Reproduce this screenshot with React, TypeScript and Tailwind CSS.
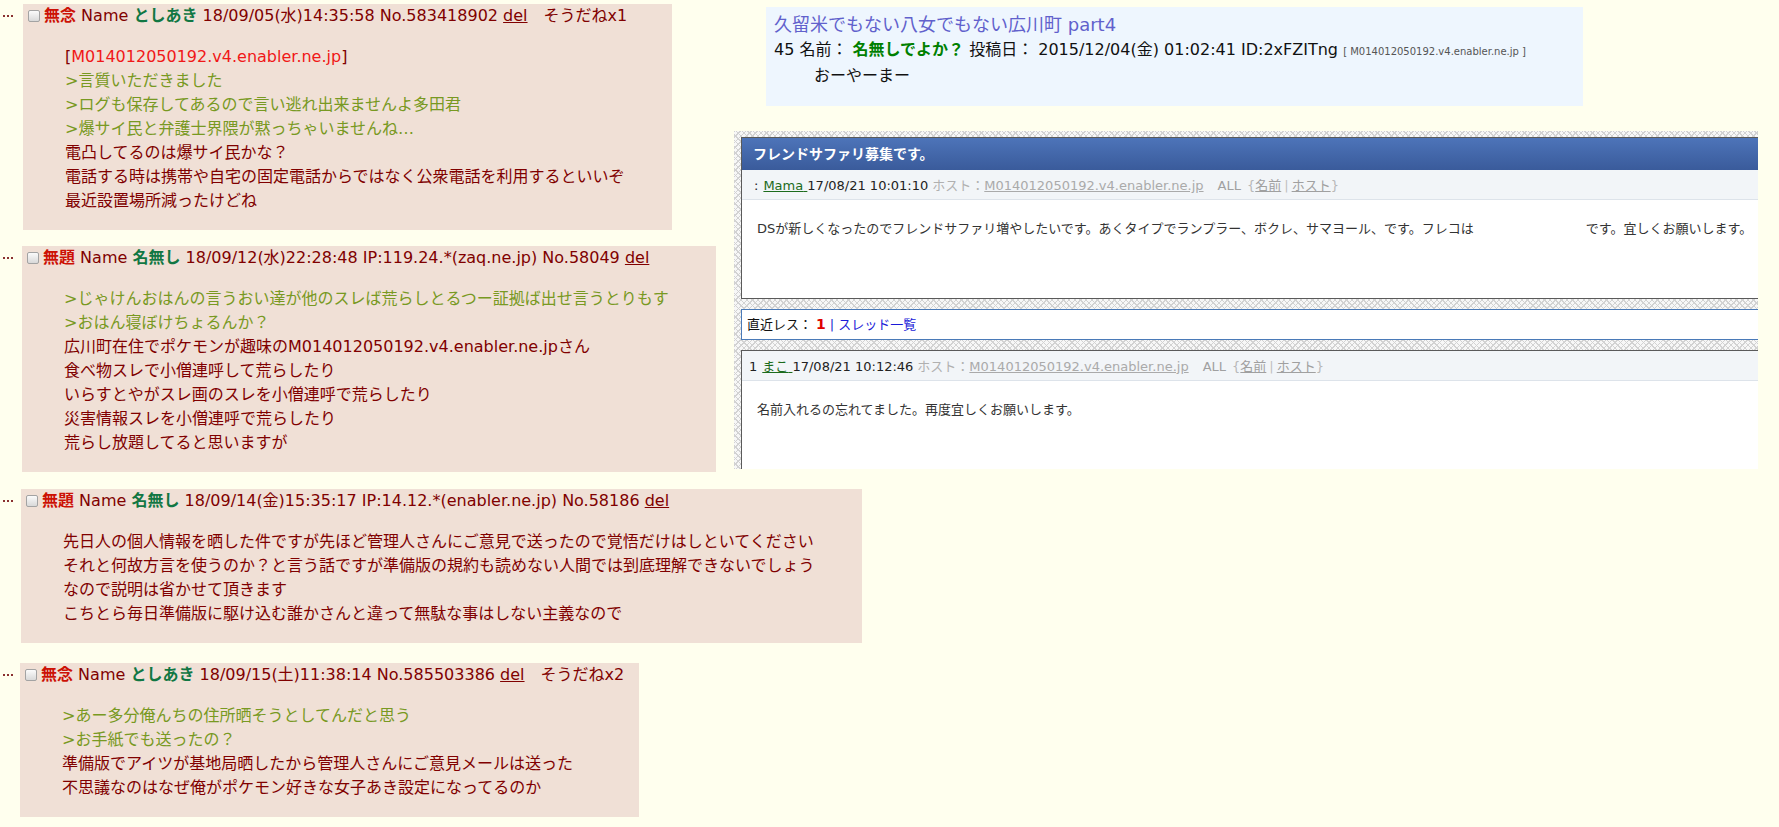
import React from "react";

type Line = { t: string; kind?: "quote" | "host" };

type PostProps = {
  subject: string;
  name: string;
  info: string;
  sodane?: string;
  lines: Line[];
  markerW: string;
  boxW: string;
};

const hatch =
  "bg-[#f7f7f7] bg-[image:repeating-linear-gradient(45deg,#d2d2d2_0px,#d2d2d2_1px,transparent_1px,transparent_4px),repeating-linear-gradient(135deg,#d2d2d2_0px,#d2d2d2_1px,transparent_1px,transparent_4px)]";

function Post({ subject, name, info, sodane, lines, markerW, boxW }: PostProps) {
  return (
    <div className="flex items-start">
      {/* "…" marker left of each post */}
      <div className={`${markerW} flex shrink-0 gap-[2px] pl-[3px] pt-[11px]`}>
        <span className="h-[2px] w-[2px] bg-[#8a3030]" />
        <span className="h-[2px] w-[2px] bg-[#8a3030]" />
        <span className="h-[2px] w-[2px] bg-[#8a3030]" />
      </div>
      <div className={`${boxW} bg-[#f0e0d6] text-[#800000]`}>
        {/* header */}
        <div className="flex h-[24px] items-center whitespace-nowrap pl-[5px] text-[16px]">
          <span className="inline-block h-[12px] w-[12px] rounded-[2px] border border-[#a3a3a3] bg-linear-to-b from-[#fbfbfb] to-[#d9d9d9]" />
          <span className="ml-[4px]">
            <b className="text-[#cc1105]">{subject}</b> Name{" "}
            <b className="text-[#117743]">{name}</b> {info}{" "}
            <u>del</u>
          </span>
          {sodane && <span className="ml-[16px]">{sodane}</span>}
        </div>
        {/* body */}
        <div className="my-[17px] pl-[42px] text-[16px] leading-[24px]">
          {lines.map((l, i) => (
            <div key={i} className="whitespace-nowrap">
              {l.kind === "host" ? (
                <>
                  [<span className="text-[#f01818]">{l.t}</span>]
                </>
              ) : l.kind === "quote" ? (
                <span className="text-[#789922]">{l.t}</span>
              ) : (
                l.t
              )}
            </div>
          ))}
        </div>
      </div>
    </div>
  );
}

function InfoRow({ lead, name, date }: { lead: string; name: string; date: string }) {
  return (
    <div className="flex items-center whitespace-nowrap text-[13px] text-[#222]">
      <span>{lead}</span>
      <span className="ml-[5px] text-[#1c6b1c] underline">{name}&nbsp;</span>
      <span>{date}</span>
      <span className="ml-[4px] text-[#b0b0b0]">ホスト：</span>
      <span className="text-[#aaaaaa] underline">M014012050192.v4.enabler.ne.jp</span>
      <span className="ml-[14px] text-[#a0a0a0]">ALL</span>
      <span className="ml-[6px] text-[#b8b8b8]">{"{"}</span>
      <span className="text-[#a0a0a0] underline">名前</span>
      <span className="mx-[3px] text-[#c0c0c0]">|</span>
      <span className="text-[#a0a0a0] underline">ホスト</span>
      <span className="text-[#b8b8b8]">{"}"}</span>
    </div>
  );
}

export default function App() {
  return (
    <div className="min-h-screen w-full bg-[#ffffee] font-['DejaVu_Sans','Noto_Sans_CJK_JP',sans-serif]">
      <div className="flex">
        {/* left column */}
        <div className="w-[734px] shrink-0 pt-[4px]">
          <Post
            subject="無念"
            name="としあき"
            info="18/09/05(水)14:35:58 No.583418902"
            sodane="そうだねx1"
            markerW="w-[23px]"
            boxW="w-[649px]"
            lines={[
              { t: "M014012050192.v4.enabler.ne.jp", kind: "host" },
              { t: ">言質いただきました", kind: "quote" },
              { t: ">ログも保存してあるので言い逃れ出来ませんよ多田君", kind: "quote" },
              { t: ">爆サイ民と弁護士界隈が黙っちゃいませんね…", kind: "quote" },
              { t: "電凸してるのは爆サイ民かな？" },
              { t: "電話する時は携帯や自宅の固定電話からではなく公衆電話を利用するといいぞ" },
              { t: "最近設置場所減ったけどね" },
            ]}
          />
          <div className="mt-[16px]">
            <Post
              subject="無題"
              name="名無し"
              info="18/09/12(水)22:28:48 IP:119.24.*(zaq.ne.jp) No.58049"
              markerW="w-[22px]"
              boxW="w-[694px]"
              lines={[
                { t: ">じゃけんおはんの言うおい達が他のスレば荒らしとるつー証拠ば出せ言うとりもす", kind: "quote" },
                { t: ">おはん寝ぼけちょるんか？", kind: "quote" },
                { t: "広川町在住でポケモンが趣味のM014012050192.v4.enabler.ne.jpさん" },
                { t: "食べ物スレで小僧連呼して荒らしたり" },
                { t: "いらすとやがスレ画のスレを小僧連呼で荒らしたり" },
                { t: "災害情報スレを小僧連呼で荒らしたり" },
                { t: "荒らし放題してると思いますが" },
              ]}
            />
          </div>
        </div>

        {/* right column */}
        <div className="flex-1 pt-[7px]">
          <div className="ml-[32px] h-[99px] w-[817px] bg-[#eef6fe] pl-[8px] pt-[4px]">
            <div className="text-[18px] leading-[27px] text-[#6161cc]">
              久留米でもない八女でもない広川町 part4
            </div>
            <div className="whitespace-nowrap text-[16px] leading-[24px] text-[#111]">
              45 名前： <b className="text-[#008000]">名無しでよか？</b> 投稿日： 2015/12/04(金) 01:02:41 ID:2xFZITng{" "}
              <span className="text-[10px] text-[#555]">[ M014012050192.v4.enabler.ne.jp ]</span>
            </div>
            <div className="pl-[40px] text-[16px] leading-[24px] text-[#111]">おーやーまー</div>
          </div>

          <div className={`mt-[25px] flex h-[338px] w-[1024px] flex-col pl-[7px] pt-[6px] ${hatch}`}>
            {/* thread panel */}
            <div className="border-y border-l border-[#5a5a5a] bg-white">
              <div className="flex h-[32px] items-center bg-linear-to-b from-[#4d74b9] to-[#3a5b9b] pl-[11px] text-[14px] font-bold text-white">
                フレンドサファリ募集です。
              </div>
              <div className="flex h-[30px] items-center border-b border-[#dde3ea] bg-[#f2f5f8] pl-[12px] pt-[3px]">
                <InfoRow lead=":" name="Mama" date="17/08/21 10:01:10" />
              </div>
              <div className="h-[98px] whitespace-nowrap pl-[15px] pt-[20px] text-[13px] leading-[18px] text-[#333]">
                DSが新しくなったのでフレンドサファリ増やしたいです。あくタイプでランプラー、ボクレ、サマヨール、です。フレコは
                <span className="inline-block w-[112px]" />
                です。宜しくお願いします。
              </div>
            </div>

            {/* recent */}
            <div className="mt-[10px] flex h-[31px] items-center border border-r-0 border-[#4a7ab8] bg-white pl-[5px] text-[13px] text-[#111]">
              直近レス：
              <span className="ml-[4px] text-[14px] font-bold text-[#e00000]">1</span>
              <span className="mx-[4px] text-[#1a1ad0]">|</span>
              <span className="text-[#1a1ad8]">スレッド一覧</span>
            </div>

            {/* reply panel */}
            <div className="mt-[10px] flex flex-1 flex-col border-t border-l border-[#5a5a5a] bg-white">
              <div className="flex h-[30px] items-center border-b border-[#dde3ea] bg-[#f2f5f8] pl-[7px] pt-[2px]">
                <InfoRow lead="1" name="まこ" date="17/08/21 10:12:46" />
              </div>
              <div className="flex-1 whitespace-nowrap pl-[15px] pt-[20px] text-[13px] leading-[18px] text-[#333]">
                名前入れるの忘れてました。再度宜しくお願いします。
              </div>
            </div>
          </div>
        </div>
      </div>

      <div className="mt-[17px]">
        <Post
          subject="無題"
          name="名無し"
          info="18/09/14(金)15:35:17 IP:14.12.*(enabler.ne.jp) No.58186"
          markerW="w-[21px]"
          boxW="w-[841px]"
          lines={[
            { t: "先日人の個人情報を晒した件ですが先ほど管理人さんにご意見で送ったので覚悟だけはしといてください" },
            { t: "それと何故方言を使うのか？と言う話ですが準備版の規約も読めない人間では到底理解できないでしょう" },
            { t: "なので説明は省かせて頂きます" },
            { t: "こちとら毎日準備版に駆け込む誰かさんと違って無駄な事はしない主義なので" },
          ]}
        />
      </div>
      <div className="mt-[20px] pb-[10px]">
        <Post
          subject="無念"
          name="としあき"
          info="18/09/15(土)11:38:14 No.585503386"
          sodane="そうだねx2"
          markerW="w-[20px]"
          boxW="w-[619px]"
          lines={[
            { t: ">あー多分俺んちの住所晒そうとしてんだと思う", kind: "quote" },
            { t: ">お手紙でも送ったの？", kind: "quote" },
            { t: "準備版でアイツが基地局晒したから管理人さんにご意見メールは送った" },
            { t: "不思議なのはなぜ俺がポケモン好きな女子あき設定になってるのか" },
          ]}
        />
      </div>
    </div>
  );
}
